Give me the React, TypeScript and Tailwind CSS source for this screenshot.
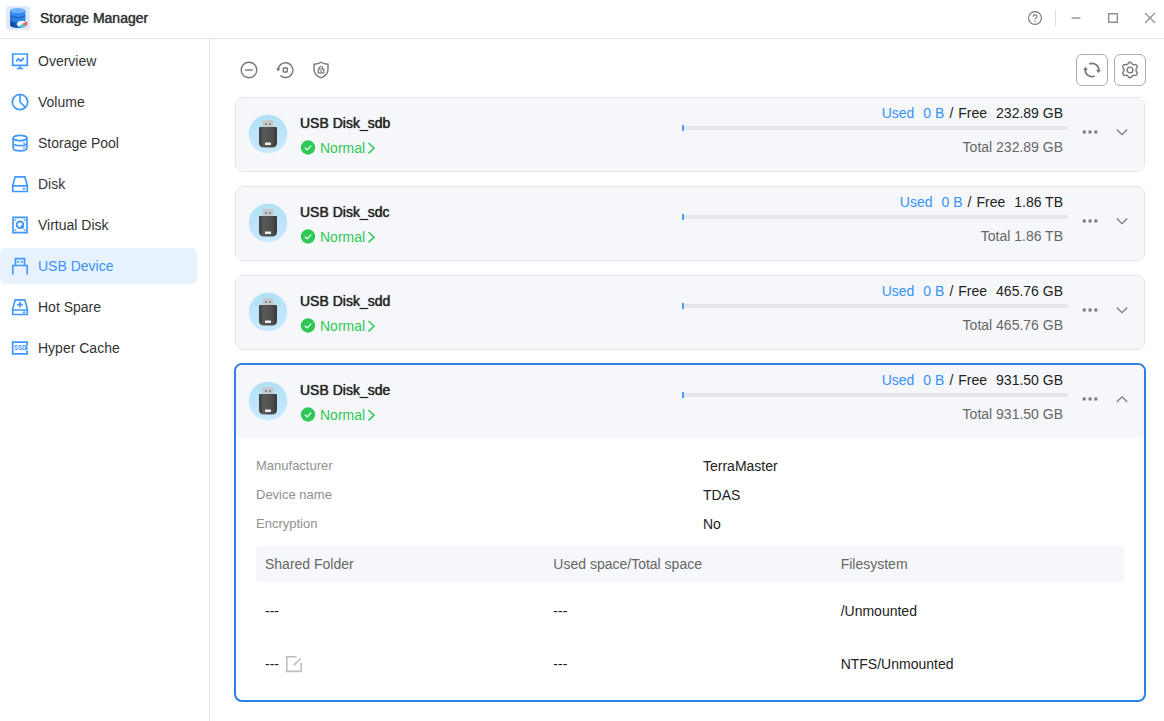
import { useState } from "react";
import type { ReactNode } from "react";
import clsx from "clsx";

interface UsbDisk {
  name: string;
  used: string;
  free: string;
  total: string;
}

const DISKS: UsbDisk[] = [
  { name: "USB Disk_sdb", used: "0 B", free: "232.89 GB", total: "232.89 GB" },
  { name: "USB Disk_sdc", used: "0 B", free: "1.86 TB", total: "1.86 TB" },
  { name: "USB Disk_sdd", used: "0 B", free: "465.76 GB", total: "465.76 GB" },
  { name: "USB Disk_sde", used: "0 B", free: "931.50 GB", total: "931.50 GB" },
];

const DETAILS = [
  { label: "Manufacturer", value: "TerraMaster" },
  { label: "Device name", value: "TDAS" },
  { label: "Encryption", value: "No" },
];

const FOLDERS = [
  { folder: "---", space: "---", filesystem: "/Unmounted", editable: false },
  { folder: "---", space: "---", filesystem: "NTFS/Unmounted", editable: true },
];

function Icon({ children, size = 18, width = 1.4, className }: { children: ReactNode; size?: number; width?: number; className?: string }) {
  return (
    <svg
      width={size}
      height={size}
      viewBox={`0 0 ${size} ${size}`}
      fill="none"
      stroke="currentColor"
      strokeWidth={width}
      className={clsx("shrink-0", className)}
      aria-hidden="true"
    >
      {children}
    </svg>
  );
}

const NAV: { label: string; icon: ReactNode }[] = [
  {
    label: "Overview",
    icon: <><path d="M1.7 2h14.6v11.4H1.7zM9 13.4v3M5.8 16.5h6.4" /><path d="M5 9.4l2.5-2.6 2.2 2.2L13 6" /></>,
  },
  {
    label: "Volume",
    icon: <><circle cx="9" cy="9" r="7.7" /><path d="M9 1.2V9l5.5 5.4" /></>,
  },
  {
    label: "Storage Pool",
    icon: (
      <>
        <ellipse cx="9" cy="4" rx="6.9" ry="2.7" />
        <path d="M2.1 4v10c0 1.6 3 2.8 6.9 2.8s6.9-1.2 6.9-2.8V4M2.1 9c0 1.5 3 2.6 6.9 2.6s6.9-1.1 6.9-2.6" />
        <path d="M12.300 9h1.500M12.300 13.700h1.500" />
      </>
    ),
  },
  {
    label: "Disk",
    icon: <><path d="M4.2 1.8h9.6l2.5 8.7v6H1.7v-6zM1.7 10.8h14.6" /><path d="M11.800 13.700h2.400" /></>,
  },
  {
    label: "Virtual Disk",
    icon: (
      <>
        <path d="M2 1.4h14v15.2H2z" />
        <circle cx="9" cy="8.8" r="3.3" strokeWidth="1.9" />
        <path d="M9.8 9.6l2.7 2.800" strokeWidth="1.9" />
        <path d="M3.600 4h1.600M12.800 4h1.600M3.600 14h1.600M12.800 14h1.600" />
      </>
    ),
  },
  {
    label: "USB Device",
    icon: <><path d="M4.500 8.200V1.700h9v6.500M1.800 17.400V8.500h14.400v8.900" /><path d="M6.400 4.800h1.800M9.800 4.800h1.800" /></>,
  },
  {
    label: "Hot Spare",
    icon: <><path d="M4.200 1.800h9.600l2.500 9v5.700H1.700v-5.700zM1.700 12h14.600" /><path d="M9 3.800v5.800M6.100 6.700h5.800M11.800 14.400h2.400" /></>,
  },
  {
    label: "Hyper Cache",
    icon: (
      <>
        <path d="M16.200 6V3.200H1.700v11.600h14.500V12M15.200 5.700h1.900M15.200 9h1.900M15.200 12.300h1.900" />
        <path d="M15.200 6.500v5" strokeDasharray="1.500 1.500" />
        <text x="3" y="11.300" fontSize="6.500" fontWeight="700" fontFamily="Roboto, sans-serif" fill="currentColor" stroke="none">SSD</text>
      </>
    ),
  },
];

function AppLogo() {
  return (
    <svg width="24" height="24" viewBox="0 0 24 24" aria-hidden="true">
      <defs>
        <linearGradient id="base" x1="0" y1="0" x2="1" y2="0">
          <stop offset="0" stopColor="#0b3f8e" />
          <stop offset="1" stopColor="#2f8fef" />
        </linearGradient>
      </defs>
      <rect width="24" height="24" rx="3.500" fill="#dfe9fd" />
      <path d="M4.200 14.500v4.700c0 1.600 3.400 2.800 7.600 2.800s7.400-1.200 7.400-2.800v-4.700z" fill="url(#base)" />
      <path d="M4.200 9.500v5.300c0 1.600 3.400 2.800 7.600 2.800s7.400-1.200 7.400-2.800V9.500z" fill="#1b5fc0" />
      <path d="M4.200 9v4.300c0 1.600 3.400 2.800 7.600 2.800s7.400-1.200 7.400-2.800V9z" fill="#2b7ee2" />
      <path d="M4.200 4.500v4.800c0 1.600 3.400 2.800 7.600 2.800s7.400-1.200 7.400-2.800V4.500z" fill="#1b63c8" />
      <path d="M4.200 4.500v3.600c0 1.600 3.400 2.800 7.600 2.800s7.400-1.200 7.400-2.800V4.500z" fill="#3389ee" />
      <ellipse cx="11.700" cy="4.600" rx="7.500" ry="2.600" fill="#6cb2ff" />
      <ellipse cx="16" cy="18" rx="5.200" ry="3.200" fill="#f4f6f9" />
      <path d="M15.800 18.200l4.600-2.700c1.900 1.200 1.300 3.300-.2 4.600z" fill="#e8605f" />
      <path d="M15.800 18.200l4.400 2c-1.800 1.500-5.200 1.500-7.200.2z" fill="#3fc3cf" />
    </svg>
  );
}

function UsbAvatar() {
  return (
    <svg width="40" height="40" viewBox="0 0 40 40" className="shrink-0" aria-hidden="true">
      <defs>
        <linearGradient id="sky" x1="0" y1="0" x2="0" y2="1">
          <stop offset="0" stopColor="#b0e1f4" />
          <stop offset="1" stopColor="#c9e9ff" />
        </linearGradient>
        <linearGradient id="stick" x1="0" y1="0" x2="1" y2="0">
          <stop offset="0" stopColor="#3b3b3b" />
          <stop offset="0.2" stopColor="#5b5b5b" />
          <stop offset="0.8" stopColor="#4c4c4c" />
          <stop offset="1" stopColor="#363636" />
        </linearGradient>
      </defs>
      <circle cx="20" cy="20" r="19.300" fill="url(#sky)" />
      <path d="M14.500 7q0-1 1-1h9q1 0 1 1v7h-11z" fill="#c4c9cc" />
      <path d="M17 9h2v2h-2zM21 9h2v2h-2z" fill="#868d91" />
      <path d="M11 14q0-1 1-1h16q1 0 1 1v14.500q0 5-5 5h-8q-5 0-5-5z" fill="url(#stick)" />
      <path d="M14 13v19M26 13v19" stroke="#404040" strokeWidth="0.800" />
      <rect x="17" y="28.500" width="6" height="2.400" rx="0.500" fill="#eceded" />
    </svg>
  );
}

function TitleBar() {
  return (
    <header className="flex h-[39px] items-center border-b border-[#e2e3e9] px-1.5 pb-0.5">
      <AppLogo />
      <h1 className="ml-2.5 text-[#333] [text-shadow:0_0_1px_#333]">Storage Manager</h1>
      <div className="ml-auto flex items-center text-[#909090]">
        <button aria-label="Help" className="text-[#777]">
          <Icon size={16} width={1.1}>
            <circle cx="8" cy="8" r="6.400" />
            <path d="M6.100 6.700c0-2.500 3.900-2.400 3.900-.2 0 1.400-2 1.400-2 3M8 10.500v1.200" />
          </Icon>
        </button>
        <span className="mx-3 h-4 w-px bg-[#dcdde2]" />
        <button aria-label="Minimize"><Icon size={16}><path d="M3.500 8h9" /></Icon></button>
        <button aria-label="Maximize" className="ml-[21px]"><Icon size={16}><path d="M3.700 3.700h8.600v8.600H3.700z" /></Icon></button>
        <button aria-label="Close" className="ml-[21px]"><Icon size={16} width={1.3}><path d="M3 3l10 10M13 3L3 13" /></Icon></button>
      </div>
    </header>
  );
}

function Sidebar() {
  return (
    <nav className="flex w-[210px] shrink-0 flex-col gap-[5px] border-r border-[#e2e3e9] pt-1 pr-3">
      {NAV.map(({ label, icon }) => (
        <a
          key={label}
          href="#"
          className={clsx(
            "flex h-9 items-center gap-[9px] rounded-md pl-[11px]",
            label === "USB Device" ? "bg-[#e8f2ff] text-[#3792fa]" : "text-[#333]",
          )}
        >
          <Icon width={1.7} className="text-[#3f98ff]">{icon}</Icon>
          {label}
        </a>
      ))}
    </nav>
  );
}

function Toolbar() {
  return (
    <div className="flex items-center justify-between">
      <div className="flex gap-[18px] pb-px pl-[5px] text-[#777]">
        <button aria-label="Eject"><Icon width={1.4}><circle cx="9" cy="9" r="7.800" /><path d="M5 9h8" /></Icon></button>
        <button aria-label="Restore">
          <Icon width={1.4}>
            <path d="M2.100 8.800a7.400 7.400 0 1 1 2.200 5.600" />
            <path d="M.2 7.600h3.900L2.100 10.300z" fill="currentColor" strokeWidth="0.300" />
            <rect x="7.300" y="7" width="4" height="4" rx="0.400" />
          </Icon>
        </button>
        <button aria-label="Encryption">
          <Icon width={1.4}>
            <path d="M9 1.200c2 1.400 4.500 1.900 7 2v5.400c0 4.200-3 6.700-7 8.200-4-1.500-7-4-7-8.200V3.200c2.500-.1 5-.6 7-2z" />
            <path d="M6.200 8h5.600v3.900H6.200zM7.400 8V7c0-2 3.200-2 3.200 0v1M7.800 10h2.400" strokeWidth="1.200" />
          </Icon>
        </button>
      </div>
      <div className="-mr-px flex gap-1.5 text-[#777]">
        <button aria-label="Refresh" className="grid size-8 place-items-center rounded-md border border-[#acacac]">
          <Icon width={1.8}>
            <path d="M2.500 7.500a6.600 6.600 0 0 0 9.200 7.500M15.500 10.500A6.600 6.600 0 0 0 6.300 3" />
            <path d="M.5 8.900l2.100-2.900 2 2.900zM13.400 9.100l2 2.900 2.100-2.900z" fill="currentColor" strokeWidth="0.300" />
          </Icon>
        </button>
        <button aria-label="Settings" className="grid size-8 place-items-center rounded-md border border-[#acacac]">
          <Icon width={1.4}>
            <path d="M7.300 2.300Q9 .2 10.700 2.300Q11.500 4 13.300 3.600Q16 3.300 16.300 5.500Q16.300 6.600 15.400 7.400Q14.400 9 15.400 10.600Q16.300 11.400 16.300 12.500Q16 14.700 13.300 14.400Q11.500 14 10.700 15.700Q9 17.800 7.300 15.700Q6.500 14 4.700 14.400Q2 14.700 1.700 12.500Q1.700 11.400 2.600 10.600Q3.600 9 2.600 7.400Q1.700 6.600 1.700 5.500Q2 3.300 4.700 3.600Q6.500 4 7.300 2.300z" />
            <circle cx="9" cy="9" r="2.900" />
          </Icon>
        </button>
      </div>
    </div>
  );
}

function Details() {
  return (
    <div className="px-5 pt-[13px] pb-3">
      <dl>
        {DETAILS.map(({ label, value }) => (
          <div key={label} className="grid h-[29px] grid-cols-2 items-center">
            <dt className="pt-px text-[13px] text-[#909090]">{label}</dt>
            <dd className="pl-[13px]">{value}</dd>
          </div>
        ))}
      </dl>
      <table className="mt-2 w-full table-fixed text-left">
        <thead>
          <tr className="h-9 bg-[#f6f7fa] text-[#666]">
            <th className="rounded-l pl-[9px] font-normal">Shared Folder</th>
            <th className="pl-2 font-normal">Used space/Total space</th>
            <th className="rounded-r pl-1.5 font-normal">Filesystem</th>
          </tr>
        </thead>
        <tbody>
          {FOLDERS.map((row) => (
            <tr key={row.filesystem} className="h-[53px]">
              <td className="pt-1 pl-[9px]">
                <div className="flex items-center gap-1.5">
                  {row.folder}
                  {row.editable && (
                    <button aria-label="Edit shared folder" className="text-[#bdbdbd]">
                      <Icon width={1.6}>
                        <path d="M11.500 1.800H1.800v14.600h14.400V8M8.800 10.200l7-6.700" />
                      </Icon>
                    </button>
                  )}
                </div>
              </td>
              <td className="pt-1 pl-2">{row.space}</td>
              <td className="pt-1 pl-1.5">{row.filesystem}</td>
            </tr>
          ))}
        </tbody>
      </table>
    </div>
  );
}

function DiskCard({ disk, open, onToggle }: { disk: UsbDisk; open: boolean; onToggle: () => void }) {
  return (
    <section className={clsx("rounded-lg", open ? "-m-px border-2 border-[#2b80e0]" : "border border-[#e2e3e9]")}>
      <div className="flex h-[73px] items-center rounded-md bg-[#f6f7fa] pr-3.5 pb-0.5 pl-3">
        <UsbAvatar />
        <div className="ml-3 flex flex-1 flex-col items-start gap-[5px] pt-1">
          <h2 className="[text-shadow:0_0_1px_#222]">{disk.name}</h2>
          <button className="flex items-center text-[#2fc857]">
            <Icon size={16} className="mr-1">
              <circle cx="8" cy="7.500" r="7.200" fill="currentColor" stroke="none" />
              <path d="M4.900 7.700l2.300 2.200 4-4.300" stroke="#fff" strokeWidth="1.200" />
            </Icon>
            Normal
            <Icon size={12} width={1.5}><path d="M3.500 1L9 6.200 3.500 11.400" /></Icon>
          </button>
        </div>

        <div className="w-[386px] pb-2">
          <p className="flex justify-end pr-[5px]">
            <span className="flex gap-[9px] text-[#3792fa]"><span>Used</span><span>{disk.used}</span></span>
            <span className="mx-[5px]">/</span>
            <span className="flex gap-[9px]"><span>Free</span><span>{disk.free}</span></span>
          </p>
          <div className="mt-0.5 mb-1.5 flex h-1.5 items-center">
            <div className="h-1.5 w-0.5 bg-[#4b9dff]" />
            <div className="h-1 flex-1 rounded-r-sm bg-[#e4e6ec]" />
          </div>
          <p className="pr-[5px] text-right text-[#666]">Total {disk.total}</p>
        </div>

        <div className="ml-3.5 flex gap-4 pb-1 text-[#777]">
          <button aria-label={`More actions for ${disk.name}`}>
            <Icon size={16}>
              <path d="M.800 6.500h2.900v2.900H.800zM6.600 6.500h2.900v2.900H6.600zM12.400 6.500h2.900v2.900h-2.900z" fill="currentColor" stroke="none" />
            </Icon>
          </button>
          <button aria-label={`Toggle ${disk.name}`} aria-expanded={open} onClick={onToggle}>
            <Icon size={16} width={1.2}>
              <path d={open ? "M2.800 11L8 5.800l5.200 5.200" : "M2.800 5.500L8 10.700l5.200-5.200"} />
            </Icon>
          </button>
        </div>
      </div>
      {open && <Details />}
    </section>
  );
}

export default function App() {
  const [openDisk, setOpenDisk] = useState("USB Disk_sde");

  return (
    <div className="flex min-h-screen flex-col bg-white font-['Liberation_Sans',Arial,sans-serif] text-sm text-[#222]">
      <TitleBar />
      <div className="flex flex-1">
        <Sidebar />
        <main className="flex-1 pt-[15px] pr-[19px] pl-[25px]">
          <Toolbar />
          <div className="mt-[11px] flex flex-col gap-3.5">
            {DISKS.map((disk) => (
              <DiskCard
                key={disk.name}
                disk={disk}
                open={openDisk === disk.name}
                onToggle={() => setOpenDisk(openDisk === disk.name ? "" : disk.name)}
              />
            ))}
          </div>
        </main>
      </div>
    </div>
  );
}
